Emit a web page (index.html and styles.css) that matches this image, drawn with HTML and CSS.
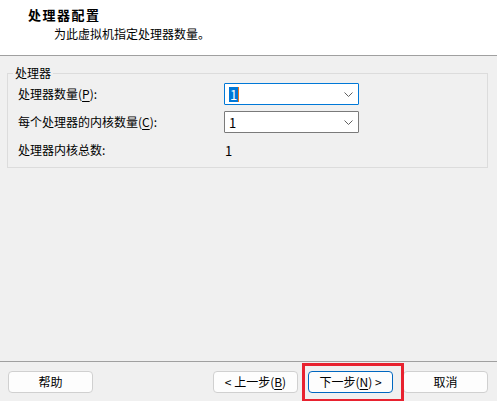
FILE: index.html
```html
<!DOCTYPE html>
<html lang="zh-CN">
<head>
<meta charset="utf-8">
<title>处理器配置</title>
<link rel="stylesheet" href="styles.css">
</head>
<body>
<div class="wizard">
  <header class="head">
    <div class="title">处理器配置</div>
    <div class="subtitle">为此虚拟机指定处理器数量。</div>
  </header>
  <main class="content">
    <fieldset class="group">
      <legend class="legend">处理器</legend>
      <div class="grid">
        <div class="label">处理器数量(<u>P</u>):</div>
        <div class="combo focus">
          <span class="value"><span class="sel">1</span><span class="caret"></span></span>
          <svg class="chev" width="9" height="5" viewBox="0 0 9 5"><path d="M0.5 0.5 L4.5 4.5 L8.5 0.5" fill="none" stroke="#606060" stroke-width="1"/></svg>
        </div>
        <div class="label">每个处理器的内核数量(<u>C</u>):</div>
        <div class="combo">
          <span class="value">1</span>
          <svg class="chev" width="9" height="5" viewBox="0 0 9 5"><path d="M0.5 0.5 L4.5 4.5 L8.5 0.5" fill="none" stroke="#606060" stroke-width="1"/></svg>
        </div>
        <div class="label">处理器内核总数:</div>
        <div class="total">1</div>
      </div>
    </fieldset>
  </main>
  <footer class="foot">
    <button class="btn">帮助</button>
    <div class="spacer"></div>
    <div class="nav">
      <button class="btn">&lt; 上一步(<u>B</u>)</button>
      <button class="btn primary">下一步(<u>N</u>) &gt;</button>
      <button class="btn">取消</button>
    </div>
    <div class="highlight"></div>
  </footer>
</div>
</body>
</html>
```

FILE: styles.css
```css
html, body {
  margin: 0;
  padding: 0;
}

body {
  width: 497px;
  height: 401px;
  overflow: hidden;
  background: #f0f0f0;
  color: #000;
  font-family: "Noto Sans CJK SC", "Noto Sans", sans-serif;
  font-size: 12px;
}

.wizard {
  display: flex;
  flex-direction: column;
  height: 401px;
}

.head {
  box-sizing: border-box;
  height: 56px;
  background: #fff;
  border-bottom: 1px solid #a0a0a0;
  padding: 8px 0 0 28px;
}

.title {
  font-weight: bold;
  font-size: 13px;
  letter-spacing: 1.5px;
  line-height: 14px;
}

.subtitle {
  margin: 5px 0 0 26px;
  line-height: 14px;
}

.content {
  flex: 1;
  padding: 10px 9px 0 7px;
}

.group {
  margin: 0;
  border: 1px solid #dcdcdc;
  padding: 3px 0 6px 0;
  min-width: 0;
}

.legend {
  margin-left: 5px;
  padding: 0 2px;
  line-height: 14px;
}

.grid {
  display: grid;
  grid-template-columns: 206px 135px;
  grid-auto-rows: 22px;
  row-gap: 6px;
  padding: 0 10px;
  align-items: center;
}

.label {
  line-height: 16px;
}

.label u,
.btn u {
  text-underline-offset: 2px;
}

.combo {
  box-sizing: border-box;
  height: 22px;
  display: flex;
  align-items: center;
  justify-content: space-between;
  background: #fff;
  border: 1px solid #7a7a7a;
  border-radius: 1px;
  padding: 0 5px 0 4px;
}

.combo.focus {
  border-color: #0078d7;
}

.value {
  display: flex;
  align-items: center;
  line-height: 15px;
  font-size: 13px;
}

.sel {
  background: #0078d7;
  color: #fff;
  padding: 0 1px;
}

.caret {
  width: 1px;
  height: 15px;
  background: #e8731c;
}

.chev {
  display: block;
}

.total {
  padding-left: 1px;
  font-size: 13px;
}

.foot {
  position: relative;
  box-sizing: border-box;
  height: 40px;
  border-top: 1px solid #a0a0a0;
  display: flex;
  align-items: flex-start;
  padding: 9px 9px 0 8px;
}

.spacer {
  flex: 1;
}

.nav {
  display: flex;
  gap: 10px;
}

.btn {
  box-sizing: border-box;
  width: 85px;
  height: 22px;
  background: #fdfdfd;
  border: 1px solid #d0d0d0;
  border-radius: 4px;
  font-family: inherit;
  font-size: 12px;
  color: #000;
  padding: 0;
  line-height: 18px;
}

.btn.primary {
  border-color: #0067c0;
}

.highlight {
  position: absolute;
  left: 302px;
  top: 1px;
  width: 102px;
  height: 39px;
  box-sizing: border-box;
  border: 3px solid #e8222f;
  pointer-events: none;
}
```
